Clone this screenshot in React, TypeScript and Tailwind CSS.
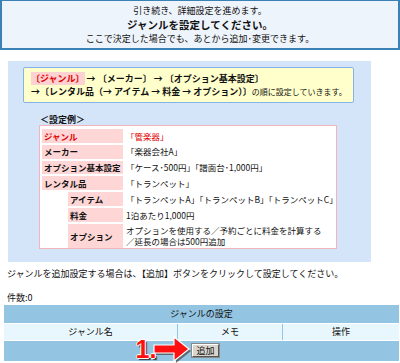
import React from "react";

const F = { fontFamily: '"Noto Sans CJK JP", "Noto Sans", sans-serif' };

function LabelRow({ label, value, red, indent }: { label: string; value: React.ReactNode; red?: boolean; indent?: boolean }) {
  return (
    <div className="flex items-stretch gap-[2px] h-[14px]">
      {indent && <div className="w-[24px] shrink-0" />}
      <div
        className={`${indent ? "w-[55px]" : "w-[81px]"} shrink-0 bg-[#ffd6d6] pl-[2px] flex items-center font-bold text-[8.5px] whitespace-nowrap ${red ? "text-[#e00000]" : "text-[#111]"}`}
      >
        {label}
      </div>
      <div className={`pl-[1px] flex items-center text-[8.5px] whitespace-nowrap ${red ? "text-[#e00000]" : "text-[#111]"}`}>{value}</div>
    </div>
  );
}

export default function App() {
  return (
    <div className="w-[400px] h-[363px] bg-white text-[#111] overflow-hidden" style={F}>
      {/* banner */}
      <div className="h-[50px] border-2 border-t border-[#3a82b6] bg-[#eef4fb] flex flex-col items-center justify-center leading-none">
        <div className="text-[9px] leading-[13px]">引き続き、詳細設定を進めます。</div>
        <div className="text-[10.5px] font-bold leading-[15px]">ジャンルを設定してください。</div>
        <div className="text-[9px] leading-[13px]">ここで決定した場合でも、あとから追加･変更できます。</div>
      </div>

      {/* panel */}
      <div className="mt-[11px] ml-[8px] w-[363px] h-[201px] bg-[#d5e5f9] pt-[6px]">
        <div className="ml-[15px] w-[331px] h-[36px] bg-[#ffffcc] border border-[#84b3e8] rounded-[2px] pl-[7px] flex flex-col justify-center text-[9px] font-bold leading-[13px]">
          <div className="whitespace-nowrap">
            <span className="text-[#e00000] bg-[#ffd2d2]">〔ジャンル〕</span> → 〔メーカー〕 → 〔オプション基本設定〕
          </div>
          <div className="whitespace-nowrap">
            →〔レンタル品（→ アイテム → 料金 → オプション）〕<span className="font-normal text-[8px]">の順に設定していきます。</span>
          </div>
        </div>
        <div className="ml-[32px] mt-[11px] text-[9px] font-bold leading-[11px]">＜設定例＞</div>
        <div className="ml-[31px] w-[298px] h-[124px] border border-[#f4b4bc] bg-white px-[2px] pt-[3px] flex flex-col gap-[2px]">
          <LabelRow label="ジャンル" value="「管楽器」" red />
          <LabelRow label="メーカー" value="「楽器会社A」" />
          <LabelRow label="オプション基本設定" value="「ケース･500円」「譜面台･1,000円」" />
          <LabelRow label="レンタル品" value="「トランペット」" />
          <LabelRow indent label="アイテム" value="「トランペットA」「トランペットB」「トランペットC」" />
          <LabelRow indent label="料金" value="1泊あたり1,000円" />
          <div className="flex items-stretch gap-[2px]">
            <div className="w-[24px] shrink-0" />
            <div className="w-[55px] shrink-0 bg-[#ffd6d6] pl-[2px] flex items-center font-bold text-[8.5px] h-[24px]">オプション</div>
            <div className="pl-[1px] text-[8.5px] leading-[11px] flex flex-col justify-center whitespace-nowrap">
              <div>オプションを使用する／予約ごとに料金を計算する</div>
              <div>／延長の場合は500円追加</div>
            </div>
          </div>
        </div>
      </div>

      <div className="mt-[5px] ml-[7px] text-[9px] leading-[13px] whitespace-nowrap">ジャンルを追加設定する場合は、【追加】ボタンをクリックして設定してください。</div>
      <div className="mt-[11px] ml-[7px] text-[9px] leading-[13px]">件数:0</div>

      {/* bottom table */}
      <div className="mt-[1px] ml-[4px] w-[395px] bg-[#93c4e1] text-[9px]">
        <div className="h-[18px] flex items-center justify-center">ジャンルの設定</div>
        <div className="flex h-[17px] gap-[1px] border-t border-white">
          <div className="w-[173px] bg-[#e8f7fd] flex items-center justify-center">ジャンル名</div>
          <div className="w-[104px] bg-[#e8f7fd] flex items-center justify-center">メモ</div>
          <div className="flex-1 bg-[#e8f7fd] flex items-center justify-center">操作</div>
        </div>
        <div className="h-[21px] flex items-center justify-center border-t border-white">
          <span className="relative ml-[8px]">
            <span
              className="absolute left-[-57px] top-[-7px] text-[25px] font-bold leading-none text-[#ff1010]"
              style={{
                fontFamily: '"Liberation Sans", Arial, sans-serif',
                textShadow: "1px 0 #fff, -1px 0 #fff, 0 1px #fff, 0 -1px #fff, 2px 2px 1px #333",
              }}
            >
              1.
            </span>
            <svg className="absolute left-[-39px] top-[-9px]" width="40" height="30" viewBox="0 0 40 30">
              <path d="M3 12 L23 12 L23 4 L38 16 L23 28 L23 20 L3 20 Z" fill="#444" opacity="0.7" />
              <path d="M1 10 L21 10 L21 2 L36 14 L21 26 L21 18 L1 18 Z" fill="#ff1010" stroke="#fff" strokeWidth="1.2" />
            </svg>
            <button className="relative h-[13px] px-[3px] bg-[#d9d5cd] border border-t-white border-l-white border-b-[#555] border-r-[#555] outline outline-1 outline-[#888] text-[9px] leading-[11px] text-[#111]">
              追加
            </button>
          </span>
        </div>
      </div>
    </div>
  );
}
